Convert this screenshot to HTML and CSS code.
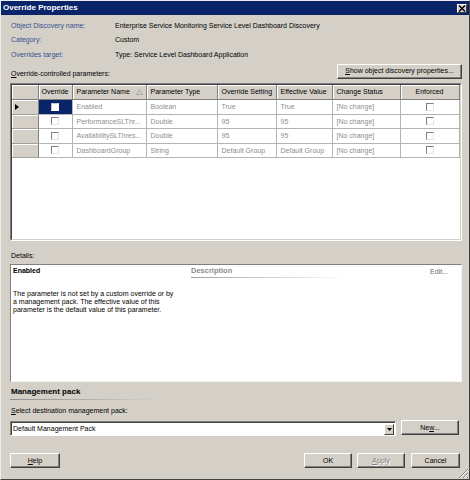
FILE: index.html
```html
<!DOCTYPE html>
<html>
<head>
<meta charset="utf-8">
<link rel="stylesheet" href="styles.css">
</head>
<body>
<div class="window">
  <div class="titlebar">
    <span class="title">Override Properties</span>
    <span class="close"><svg width="8" height="7" viewBox="0 0 8 7"><path d="M1 0.5 L7 6.5 M7 0.5 L1 6.5" stroke="#000" stroke-width="1.4"/></svg></span>
  </div>
  <div class="content">
    <div class="info">
      <div class="lbl">Object Discovery name:</div><div class="val">Enterprise Service Monitoring Service Level Dashboard Discovery</div>
      <div class="lbl">Category:</div><div class="val">Custom</div>
      <div class="lbl">Overrides target:</div><div class="val">Type: Service Level Dashboard Application</div>
    </div>
    <div class="params-row">
      <span class="params-label"><u>O</u>verride-controlled parameters:</span>
      <button class="btn btn-show"><u>S</u>how object discovery properties...</button>
    </div>
    <div class="grid">
      <div class="grid-inner">
        <table class="tbl">
          <colgroup>
            <col class="c-rh"><col class="c-ov"><col class="c-pn"><col class="c-pt"><col class="c-os"><col class="c-ev"><col class="c-cs"><col class="c-en">
          </colgroup>
          <thead>
            <tr>
              <th class="rh"></th>
              <th class="center">Override</th>
              <th><span class="sorth">Parameter Name<svg class="sort" width="7" height="6" viewBox="0 0 7 6"><path d="M0.5 5.5 L3.5 0.5 L6.5 5.5 Z" fill="none" stroke="#a8a8a8" stroke-width="1"/></svg></span></th>
              <th>Parameter Type</th>
              <th>Override Setting</th>
              <th>Effective Value</th>
              <th>Change Status</th>
              <th class="center">Enforced</th>
            </tr>
          </thead>
          <tbody>
            <tr>
              <td class="rh"><span class="arrow"></span></td>
              <td class="center sel"><span class="cb cb-sel"></span></td>
              <td>Enabled</td>
              <td>Boolean</td>
              <td>True</td>
              <td>True</td>
              <td>[No change]</td>
              <td class="center"><span class="cb"></span></td>
            </tr>
            <tr>
              <td class="rh"></td>
              <td class="center"><span class="cb"></span></td>
              <td>PerformanceSLThr...</td>
              <td>Double</td>
              <td>95</td>
              <td>95</td>
              <td>[No change]</td>
              <td class="center"><span class="cb"></span></td>
            </tr>
            <tr>
              <td class="rh"></td>
              <td class="center"><span class="cb"></span></td>
              <td>AvailabilitySLThres...</td>
              <td>Double</td>
              <td>95</td>
              <td>95</td>
              <td>[No change]</td>
              <td class="center"><span class="cb"></span></td>
            </tr>
            <tr>
              <td class="rh"></td>
              <td class="center"><span class="cb"></span></td>
              <td>DashboardGroup</td>
              <td>String</td>
              <td>Default Group</td>
              <td>Default Group</td>
              <td>[No change]</td>
              <td class="center"><span class="cb"></span></td>
            </tr>
          </tbody>
        </table>
      </div>
    </div>
    <div class="details-label">Details:</div>
    <div class="details">
      <div class="details-head">
        <span class="d-name">Enabled</span>
        <span class="d-desc">Description</span>
        <span class="d-edit">Edit...</span>
      </div>
      <p class="d-text">The parameter is not set by a custom override or by<br>a management pack. The effective value of this<br>parameter is the default value of this parameter.</p>
    </div>
    <div class="mp-head">Management pack</div>
    <div class="mp-line"></div>
    <div class="mp-label"><u>S</u>elect destination management pack:</div>
    <div class="mp-row">
      <div class="combo">
        <span class="combo-text">Default Management Pack</span>
        <span class="combo-btn"><svg width="5" height="3" viewBox="0 0 5 3"><path d="M0 0 L5 0 L2.5 3 Z" fill="#000"/></svg></span>
      </div>
      <button class="btn btn-new">Ne<u>w</u>...</button>
    </div>
    <div class="footer">
      <button class="btn btn-help"><u>H</u>elp</button>
      <button class="btn btn-ok">OK</button>
      <button class="btn btn-apply" disabled><u>A</u>pply</button>
      <button class="btn btn-cancel">Cancel</button>
    </div>
  </div>
  <svg class="grip" width="11" height="11" viewBox="0 0 11 11">
    <path d="M10 1 L1 10 M10 5 L5 10 M10 9 L9 10" stroke="#808080" stroke-width="1"/>
    <path d="M10 2 L2 10 M10 6 L6 10" stroke="#ffffff" stroke-width="1"/>
  </svg>
</div>
</body>
</html>
```
FILE: styles.css
```css
* { box-sizing: border-box; }
html, body { margin: 0; padding: 0; }
body {
  width: 470px;
  height: 480px;
  background: #d4d0c8;
  font-family: "Liberation Sans", Arial, sans-serif;
  font-size: 7px;
  color: #000;
  overflow: hidden;
}
u { text-decoration: underline; }

.window {
  position: relative;
  width: 470px;
  height: 480px;
  background: #d4d0c8;
  border: 1px solid;
  border-color: #eeeeee #404040 #404040 #eeeeee;
  display: flex;
  flex-direction: column;
}

.titlebar {
  height: 14px;
  background: #0a246a;
  display: flex;
  align-items: center;
  justify-content: space-between;
  padding: 0 2px 0 2px;
}
.title {
  color: #fff;
  font-weight: bold;
  font-size: 8px;
  line-height: 14px;
}
.close {
  width: 10px;
  height: 9px;
  background: #d4d0c8;
  border: 1px solid;
  border-color: #fff #404040 #404040 #fff;
  display: flex;
  align-items: center;
  justify-content: center;
}

.content {
  flex: 1;
  display: flex;
  flex-direction: column;
  padding: 0 7px 0 9px;
}

.info {
  display: grid;
  grid-template-columns: 105px 1fr;
  grid-auto-rows: 14.5px;
  align-items: center;
  margin-top: 3px;
}
.lbl { color: #34518f; padding-left: 1px; }
.val { color: #000; }

.params-row {
  height: 17px;
  display: flex;
  justify-content: space-between;
  align-items: flex-end;
}
.params-label { line-height: 10px; padding-left: 1px; }

.btn {
  height: 15px;
  background: #d4d0c8;
  border: 1px solid;
  border-color: #ffffff #404040 #404040 #ffffff;
  box-shadow: inset -1px -1px 0 #808080;
  font-family: "Liberation Sans", Arial, sans-serif;
  font-size: 7px;
  color: #000;
  text-align: center;
  padding: 0;
  margin: 0;
  line-height: 12px;
}
.btn-show { width: 125px; }

.grid {
  margin-top: 4px;
  height: 158px;
  border: 1px solid;
  border-color: #808080 #ffffff #ffffff #808080;
}
.grid-inner {
  height: 100%;
  background: #fff;
  border: 1px solid;
  border-color: #404040 #d4d0c8 #d4d0c8 #404040;
}
.tbl {
  width: 447px;
  table-layout: fixed;
  border-collapse: collapse;
}
.c-rh { width: 26px; }
.c-ov { width: 34px; }
.c-pn { width: 74px; }
.c-pt { width: 71px; }
.c-os { width: 59px; }
.c-ev { width: 56px; }
.c-cs { width: 68px; }
.c-en { width: 59px; }

.tbl th {
  height: 15px;
  background: #d4d0c8;
  font-weight: normal;
  text-align: left;
  padding: 0 2px 0 4px;
  border-right: 1px solid #808080;
  border-bottom: 1px solid #808080;
  box-shadow: inset 1px 1px 0 #ffffff;
  white-space: nowrap;
  overflow: hidden;
  color: #000;
}
.tbl td {
  height: 14.5px;
  padding: 0 2px 0 4px;
  border-right: 1px solid #b4b4b4;
  border-bottom: 1px solid #b4b4b4;
  color: #8e8e8e;
  white-space: nowrap;
  overflow: hidden;
}
.tbl .center { text-align: center; padding: 0; }
.tbl td.rh {
  background: #d4d0c8;
  border-right: 1px solid #808080;
  border-bottom: 1px solid #a0a0a0;
  box-shadow: inset 1px 1px 0 #ffffff;
  padding: 0 0 0 3px;
}
.tbl td.sel { background: #0a246a; }
.sorth {
  display: flex;
  align-items: center;
  justify-content: space-between;
  padding-right: 1px;
}
.sort { display: block; }
.arrow {
  display: block;
  width: 0;
  height: 0;
  border-left: 4px solid #000;
  border-top: 3.5px solid transparent;
  border-bottom: 3.5px solid transparent;
}
.cb {
  display: inline-block;
  vertical-align: middle;
  width: 8px;
  height: 8px;
  background: #fff;
  border: 1px solid;
  border-color: #808080 #e4e4e4 #e4e4e4 #808080;
}
.cb-sel {
  border-color: #c8c8c8 #ffffff #ffffff #c8c8c8;
}

.details-label {
  margin-top: 10px;
  line-height: 10px;
  padding-left: 1px;
}
.details {
  margin-top: 3.5px;
  height: 118px;
  background: #fff;
  border: 1px solid;
  border-color: #808080 #f4f4f4 #f4f4f4 #808080;
}
.details-head {
  height: 13px;
  display: flex;
  align-items: flex-start;
  padding: 0 13px 0 2px;
}
.d-name {
  flex: 0 0 178px;
  font-weight: bold;
  line-height: 12px;
}
.d-desc {
  flex: 0 0 156px;
  height: 13px;
  font-weight: bold;
  font-size: 7.5px;
  line-height: 12px;
  color: #8c8c8c;
  background: linear-gradient(to right, #a0a0a0, #ffffff) bottom left / 100% 1px no-repeat;
}
.d-edit {
  margin-left: auto;
  line-height: 14px;
  color: #6a6a6a;
}
.d-text {
  margin: 12px 0 0 0;
  padding-left: 2px;
  line-height: 8px;
  color: #000;
}

.mp-head {
  margin-top: 5px;
  line-height: 10px;
  font-size: 8px;
  font-weight: bold;
  padding-left: 1px;
}
.mp-line {
  margin-top: 2px;
  height: 1px;
  width: 150px;
  background: linear-gradient(to right, #909090, #d4d0c8);
}
.mp-label {
  margin-top: 6px;
  line-height: 10px;
  padding-left: 1px;
}
.mp-row {
  margin-top: 4px;
  height: 16px;
  display: flex;
  align-items: flex-start;
  padding-right: 2px;
  gap: 5px;
}
.combo {
  margin-top: 1px;
  flex: 0 0 386px;
  height: 15px;
  background: #fff;
  border: 1px solid;
  border-color: #808080 #ffffff #ffffff #808080;
  box-shadow: inset 1px 1px 0 #404040;
  display: flex;
  align-items: center;
  justify-content: space-between;
  padding: 1px 1px 0 2px;
}
.combo-text { line-height: 12px; }
.combo-btn {
  width: 10px;
  height: 11px;
  background: #d4d0c8;
  border: 1px solid;
  border-color: #ffffff #404040 #404040 #ffffff;
  display: flex;
  align-items: center;
  justify-content: center;
}
.combo-btn svg { display: block; }
.btn-new { flex: 0 0 58px; }

.footer {
  margin-top: 17px;
  display: flex;
  align-items: flex-start;
  padding-right: 2px;
}
.btn-help { width: 50px; }
.btn-ok { width: 48px; margin-left: auto; }
.btn-apply { width: 48px; margin-left: 5px; color: #808080; text-shadow: 1px 1px 0 #ffffff; }
.btn-cancel { width: 49px; margin-left: 6px; }

.grip {
  position: absolute;
  right: 0;
  bottom: 0;
}
```
